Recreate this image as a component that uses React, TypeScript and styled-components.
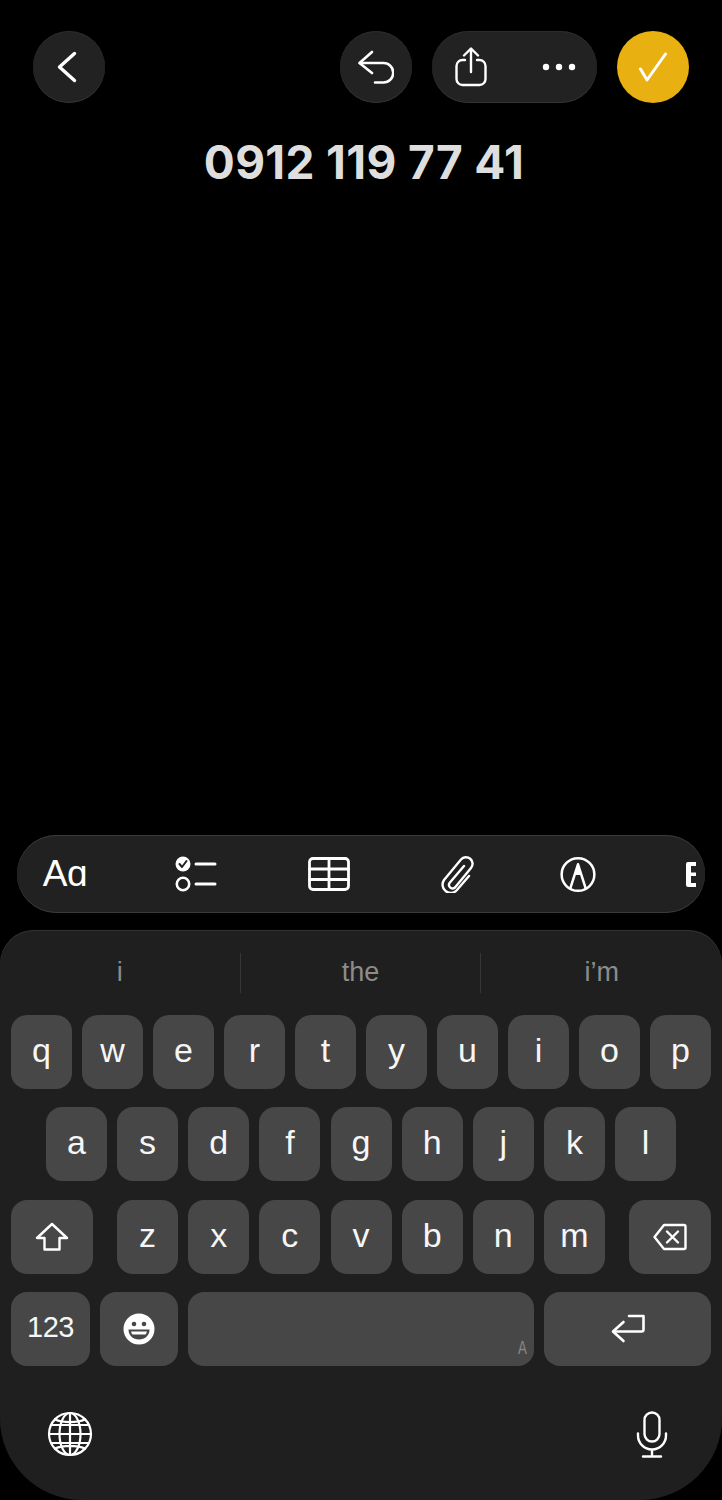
import React from "react";
import styled, { createGlobalStyle } from "styled-components";

const GlobalStyle = createGlobalStyle`
	html, body {
		margin: 0;
		padding: 0;
		background: #000;
	}
`;

const Page = styled.div`
	width: 722px;
	height: 1500px;
	display: flex;
	flex-direction: column;
	background: #000;
	font-family: Inter, "Liberation Sans", sans-serif;
	color: #fff;
	overflow: hidden;
`;

const TopBar = styled.div`
	display: flex;
	align-items: center;
	padding: 31px 33px 0;
`;

const RoundButton = styled.div<{ $accent?: boolean }>`
	width: 72px;
	height: 72px;
	border-radius: 50%;
	display: flex;
	align-items: center;
	justify-content: center;
	background: ${(p) => (p.$accent ? "#e8b011" : "#222222")};
	box-shadow: ${(p) => (p.$accent ? "none" : "inset 0 -1px 0 #333333, inset 0 1px 0 #2c2c2c")};
`;

const PillButton = styled.div`
	width: 165px;
	height: 72px;
	margin: 0 20px;
	padding: 0 21px 0 23px;
	box-sizing: border-box;
	border-radius: 36px;
	display: flex;
	align-items: center;
	justify-content: space-between;
	background: #222222;
	box-shadow: inset 0 -1px 0 #333333, inset 0 1px 0 #2c2c2c;
`;

const Grow = styled.div`
	flex: 1;
`;

const Title = styled.h1`
	margin: 30px 0 0;
	padding-left: 6px;
	text-align: center;
	font-size: 46px;
	line-height: 58px;
	font-weight: 700;
	letter-spacing: 0.35px;
	color: #dedede;
`;

const Toolbar = styled.div`
	width: 688px;
	height: 78px;
	margin: 0 17px 17px;
	padding-left: 25px;
	box-sizing: border-box;
	flex: none;
	display: flex;
	align-items: center;
	gap: 86px;
	border-radius: 39px;
	background: #212121;
	box-shadow: inset 0 1px 0 #3a3a3a, inset 0 -1px 0 #3a3a3a;
	overflow: hidden;
`;

const ToolSlot = styled.div<{ $width: number }>`
	flex: none;
	width: ${(p) => p.$width}px;
	display: flex;
	justify-content: center;
`;

const FontLabel = styled.span`
	font-family: "Liberation Sans", sans-serif;
	font-size: 37px;
	line-height: 44px;
	letter-spacing: -0.5px;
	white-space: nowrap;
`;

const Keyboard = styled.div`
	flex: none;
	height: 570px;
	display: flex;
	flex-direction: column;
	background: #1f1f1f;
	border-radius: 34px 34px 82px 82px;
	box-shadow: inset 0 1px 0 #333333;
`;

const Suggestions = styled.div`
	height: 85px;
	display: grid;
	grid-template-columns: repeat(3, 1fr);
	align-items: center;
`;

const Suggestion = styled.div<{ $divider?: boolean }>`
	height: 40px;
	display: flex;
	align-items: center;
	justify-content: center;
	font-family: "Liberation Sans", sans-serif;
	font-size: 27px;
	color: #8c8c8c;
	border-right: ${(p) => (p.$divider ? "1px solid #363636" : "none")};
`;

const Rows = styled.div`
	display: flex;
	flex-direction: column;
	gap: 18.33px;
	padding: 0 11px;
`;

const Row = styled.div<{ $spread?: boolean; $gap?: number }>`
	display: flex;
	gap: ${(p) => p.$gap ?? 10}px;
	justify-content: ${(p) => (p.$spread ? "space-between" : "center")};
`;

const Key = styled.div<{ $width?: number; $plain?: boolean }>`
	flex: none;
	width: ${(p) => p.$width ?? 61}px;
	height: 74px;
	position: relative;
	display: flex;
	align-items: center;
	justify-content: center;
	border-radius: 16px;
	background: #474747;
	font-family: "Liberation Sans", sans-serif;
	font-size: 34px;
	line-height: 68px;
	color: #f6f6f6;
	padding-bottom: ${(p) => (p.$plain ? 0 : 4)}px;
	box-sizing: border-box;
`;

const NumberLabel = styled.span`
	font-size: 29px;
	letter-spacing: -0.5px;
`;

const SpaceHint = styled.span`
	position: absolute;
	right: 5px;
	bottom: 6px;
	font-family: "Liberation Mono", monospace;
	font-size: 21px;
	line-height: 22px;
	color: #858585;
	transform: scaleX(0.7);
`;

const KeyGroup = styled.div`
	display: flex;
	gap: 10.15px;
`;

const BottomBar = styled.div`
	display: flex;
	align-items: center;
	justify-content: space-between;
	padding: 45px 54px 0 47px;
`;

const Icon = styled.svg.attrs({
	fill: "none",
	stroke: "currentColor",
	strokeLinecap: "round",
	strokeLinejoin: "round",
})`
	display: block;
	color: #fff;
`;

const topRow = ["q", "w", "e", "r", "t", "y", "u", "i", "o", "p"];
const middleRow = ["a", "s", "d", "f", "g", "h", "j", "k", "l"];
const lowerRow = ["z", "x", "c", "v", "b", "n", "m"];

const App = () => {
	return (
		<Page>
			<GlobalStyle />
			<TopBar>
				<RoundButton>
					<Icon width="24" height="34" viewBox="0 0 24 34" strokeWidth="3.4">
						<path d="M17.5 3.5 2.500 17l15 13.500" />
					</Icon>
				</RoundButton>
				<Grow />
				<RoundButton>
					<Icon width="36" height="36" viewBox="0 0 36 36" strokeWidth="2.6">
						<path d="M14 3 1.500 14 14 24" />
						<path d="M2 14h23.500a9.750 9.750 0 0 1 0 19.500H17" />
					</Icon>
				</RoundButton>
				<PillButton>
					<Icon width="32" height="40" viewBox="0 0 32 40" strokeWidth="2.4">
						<path d="M10 13H7.500a6 6 0 0 0-6 6v13a6 6 0 0 0 6 6h17a6 6 0 0 0 6-6V19a6 6 0 0 0-6-6H22" />
						<path d="M16 25V2M9 8.500l7-7 7 7" />
					</Icon>
					<Icon width="34" height="8" viewBox="0 0 34 8" strokeWidth="0">
						<circle cx="4" cy="4" r="3.2" fill="currentColor" />
						<circle cx="17" cy="4" r="3.2" fill="currentColor" />
						<circle cx="30" cy="4" r="3.2" fill="currentColor" />
					</Icon>
				</PillButton>
				<RoundButton $accent>
					<Icon width="30" height="30" viewBox="0 0 30 30" strokeWidth="3">
						<path d="M2.500 17 9 28 27.500 2" />
					</Icon>
				</RoundButton>
			</TopBar>
			<Title>0912 119 77 41</Title>
			<Grow />
			<Toolbar>
				<ToolSlot $width={46}>
					<FontLabel>Aɑ</FontLabel>
				</ToolSlot>
				<ToolSlot $width={44}>
					<Icon width="42" height="38" viewBox="0 0 42 38" strokeWidth="2.6">
						<circle cx="8" cy="9" r="7.5" fill="currentColor" stroke="none" />
						<path d="M4.500 9 7 12l4.500-6" stroke="#212121" strokeWidth="2" />
						<circle cx="8" cy="29" r="6.2" />
						<path d="M21 9h19M21 29h19" strokeWidth="3" />
					</Icon>
				</ToolSlot>
				<ToolSlot $width={50}>
					<Icon width="42" height="34" viewBox="0 0 42 34" strokeWidth="2.8">
						<rect x="1.5" y="1.5" width="39" height="31" rx="3.5" />
						<path d="M1.500 12h39M1.500 22.500h39M21 1.500v31" />
					</Icon>
				</ToolSlot>
				<ToolSlot $width={34}>
					<Icon width="34" height="38" viewBox="0 0 34 38" strokeWidth="2.4">
						<path d="M24 11 9.500 28a3.600 3.600 0 0 0 5.500 4.500L31 13a6.500 6.500 0 0 0-10-8.500L4 25a8.200 8.200 0 0 0 12.500 10.500L29 21" />
					</Icon>
				</ToolSlot>
				<ToolSlot $width={36}>
					<Icon width="37" height="37" viewBox="0 0 37 37" strokeWidth="2.6">
						<circle cx="18.5" cy="18.5" r="16.8" />
						<path d="M10.500 33 18.500 8l8 25" />
						<path d="M18.500 7 14.500 19h8z" fill="currentColor" stroke="none" />
					</Icon>
				</ToolSlot>
				<ToolSlot $width={18}>
					<Icon width="10" height="25" viewBox="0 0 10 25" strokeWidth="0">
						<path d="M2 0h8v4H5v6.500h5V14H5v7h5v4H2a2 2 0 0 1-2-2V2a2 2 0 0 1 2-2z" fill="currentColor" />
					</Icon>
				</ToolSlot>
			</Toolbar>
			<Keyboard>
				<Suggestions>
					<Suggestion $divider>i</Suggestion>
					<Suggestion $divider>the</Suggestion>
					<Suggestion>i’m</Suggestion>
				</Suggestions>
				<Rows>
					<Row>
						{topRow.map((letter) => (
							<Key key={letter}>{letter}</Key>
						))}
					</Row>
					<Row $gap={10.15}>
						{middleRow.map((letter) => (
							<Key key={letter}>{letter}</Key>
						))}
					</Row>
					<Row $spread>
						<Key $width={82} $plain>
							<Icon width="34" height="30" viewBox="0 0 34 30" strokeWidth="2.4">
								<path d="M17 2 2 16h7.500v11.500h15V16H32z" />
							</Icon>
						</Key>
						<KeyGroup>
							{lowerRow.map((letter) => (
								<Key key={letter}>{letter}</Key>
							))}
						</KeyGroup>
						<Key $width={82} $plain>
							<Icon width="34" height="28" viewBox="0 0 34 28" strokeWidth="2.4">
								<path d="M11 2h20a1.500 1.500 0 0 1 1.500 1.500v21A1.500 1.500 0 0 1 31 26H11L1.500 14z" />
								<path d="m14 8.500 11 11M25 8.500l-11 11" />
							</Icon>
						</Key>
					</Row>
					<Row>
						<Key $width={79}>
							<NumberLabel>123</NumberLabel>
						</Key>
						<Key $width={78} $plain>
							<Icon width="32" height="32" viewBox="0 0 32 32" strokeWidth="0">
								<circle cx="16" cy="16" r="15.5" fill="currentColor" />
								<circle cx="11" cy="11" r="2.3" fill="#474747" />
								<circle cx="21" cy="11" r="2.3" fill="#474747" />
								<path d="M5.500 16.500h21c0 6-4.500 10-10.500 10s-10.500-4-10.500-10z" fill="#474747" />
								<path d="M8 18.500h16c-.5 1.500-1 2.500-1.500 3h-13c-.5-.5-1-1.500-1.500-3z" fill="currentColor" />
							</Icon>
						</Key>
						<Key $width={346}>
							<SpaceHint>A</SpaceHint>
						</Key>
						<Key $width={167} $plain>
							<Icon width="34" height="30" viewBox="0 0 34 30" strokeWidth="2.6">
								<path d="M12.500 8 2 17.500 12.500 27" />
								<path d="M2.500 17.500h28a2 2 0 0 0 2-2V2H18" />
							</Icon>
						</Key>
					</Row>
				</Rows>
				<BottomBar>
					<Icon width="46" height="46" viewBox="0 0 46 46" strokeWidth="2.2">
						<circle cx="23" cy="23" r="21" />
						<ellipse cx="23" cy="23" rx="10.500" ry="21" />
						<path d="M23 2v42M2 23h42M4 14h38M4 32h38M8 8.500c8 3.500 22 3.500 30 0M8 37.500c8-3.500 22-3.500 30 0" />
					</Icon>
					<Icon width="32" height="47" viewBox="0 0 32 47" strokeWidth="2.4">
						<rect x="8.5" y="1.500" width="15" height="29" rx="7.5" />
						<path d="M2 22.500v2a14 14 0 0 0 28 0v-2M16 38.500v7M7 45.500h18" />
					</Icon>
				</BottomBar>
			</Keyboard>
		</Page>
	);
};

export default App;
